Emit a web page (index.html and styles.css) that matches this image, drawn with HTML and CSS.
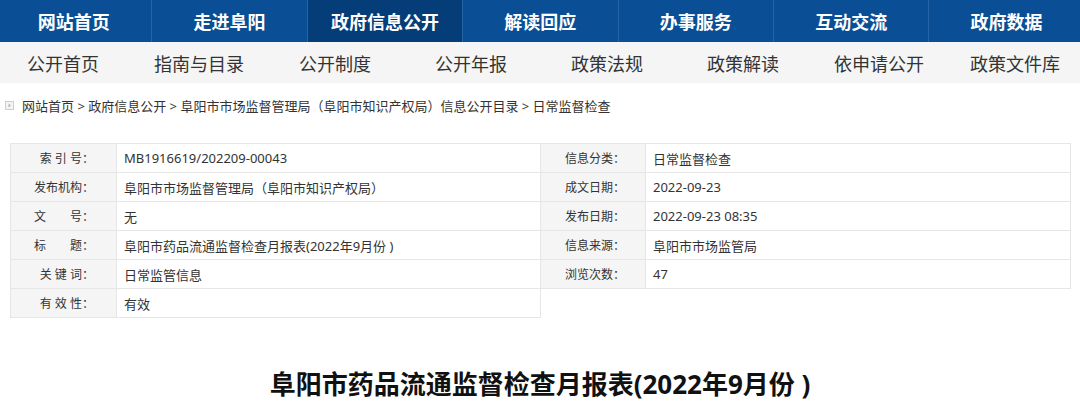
FILE: index.html
```html
<!DOCTYPE html>
<html lang="zh-CN">
<head>
<meta charset="utf-8">
<title>阜阳市药品流通监督检查月报表(2022年9月份 )</title>
<link rel="stylesheet" href="styles.css">
</head>
<body>
<div class="page">
  <nav class="mainnav">
    <div class="mainnav-inner">
      <a class="mn">网站首页</a>
      <a class="mn">走进阜阳</a>
      <a class="mn active">政府信息公开</a>
      <a class="mn">解读回应</a>
      <a class="mn">办事服务</a>
      <a class="mn">互动交流</a>
      <a class="mn">政府数据</a>
    </div>
  </nav>
  <nav class="subnav">
    <div class="subnav-inner">
      <a class="sn">公开首页</a>
      <a class="sn">指南与目录</a>
      <a class="sn">公开制度</a>
      <a class="sn">公开年报</a>
      <a class="sn">政策法规</a>
      <a class="sn">政策解读</a>
      <a class="sn">依申请公开</a>
      <a class="sn">政策文件库</a>
    </div>
  </nav>
  <div class="crumb">
    <svg class="crumb-ico" width="9" height="9" viewBox="0 0 9 9"><rect x="0.5" y="0.5" width="8" height="8" fill="#f4f4f4" stroke="#cfcfcf"/><path d="M3.5 2.5 L6 4.5 L3.5 6.5 Z" fill="#b5b5b5"/></svg>
    <span>网站首页 &gt; 政府信息公开 &gt; 阜阳市市场监督管理局（阜阳市知识产权局）信息公开目录 &gt; 日常监督检查</span>
  </div>
  <div class="meta">
    <table class="mt mt-left">
      <tr><th>索 引 号<span class="colon">：</span></th><td>MB1916619/202209-00043</td></tr>
      <tr><th>发布机构<span class="colon">：</span></th><td>阜阳市市场监督管理局（阜阳市知识产权局）</td></tr>
      <tr><th>文&emsp;&emsp;号<span class="colon">：</span></th><td>无</td></tr>
      <tr><th>标&emsp;&emsp;题<span class="colon">：</span></th><td>阜阳市药品流通监督检查月报表(2022年9月份 )</td></tr>
      <tr><th>关 键 词<span class="colon">：</span></th><td>日常监管信息</td></tr>
      <tr><th>有 效 性<span class="colon">：</span></th><td>有效</td></tr>
    </table>
    <table class="mt mt-right">
      <tr><th>信息分类<span class="colon">：</span></th><td>日常监督检查</td></tr>
      <tr><th>成文日期<span class="colon">：</span></th><td>2022-09-23</td></tr>
      <tr><th>发布日期<span class="colon">：</span></th><td>2022-09-23 08:35</td></tr>
      <tr><th>信息来源<span class="colon">：</span></th><td>阜阳市市场监管局</td></tr>
      <tr><th>浏览次数<span class="colon">：</span></th><td>47</td></tr>
    </table>
  </div>
  <h1 class="title">阜阳市药品流通监督检查月报表(2022年9月份 )</h1>
</div>
</body>
</html>
```
FILE: styles.css
```css
* { box-sizing: border-box; }
html, body { margin: 0; padding: 0; background: #fff; }
body {
  font-family: "Noto Sans", "Noto Sans CJK SC", sans-serif;
  color: #333;
  width: 1080px;
  height: 414px;
  overflow: hidden;
}
.page { width: 1080px; }

.mainnav { height: 42px; background: #0a4f95; overflow: hidden; }
.mainnav-inner {
  display: grid;
  grid-template-columns: repeat(7, 155.4px);
  width: 1088px;
  margin-left: -4px;
  height: 42px;
}
.mn {
  display: flex;
  align-items: center;
  justify-content: center;
  color: #fff;
  font-size: 18px;
  font-weight: bold;
  border-left: 1px solid #2564a6;
}
.mn:first-child { border-left: none; }
.mn.active { background: #053d78; }

.subnav { height: 41px; background: #f5f5f5; overflow: hidden; }
.subnav-inner {
  display: grid;
  grid-template-columns: repeat(8, 136px);
  width: 1088px;
  margin-left: -5px;
  height: 41px;
}
.sn {
  display: flex;
  align-items: center;
  justify-content: center;
  color: #333;
  font-size: 18px;
}

.crumb {
  display: flex;
  align-items: center;
  gap: 8px;
  padding-left: 5px;
  margin-top: 14px;
  height: 16px;
  font-size: 13px;
  color: #333;
}
.crumb-ico { flex: none; }

.meta {
  display: flex;
  align-items: flex-start;
  padding-left: 10px;
  margin-top: 30px;
}
.mt {
  border-collapse: collapse;
  width: 531px;
  font-size: 12px;
}
.mt-right { margin-left: -1px; }
.mt th, .mt td {
  border: 1px solid #e6e6e6;
  height: 29px;
  padding: 0;
  font-weight: normal;
  color: #333;
}
.mt th {
  background: #f5f5f5;
  text-align: right;
  padding-right: 22px;
  width: 106px;
}
.mt-right th { width: 105px; padding-right: 20px; }
.colon {
  font-family: "Noto Sans CJK TC", "Noto Sans CJK SC", sans-serif;
}
.mt td {
  text-align: left;
  padding-left: 7px;
  font-size: 13px;
}

.title {
  margin: 49px 0 0;
  text-align: center;
  font-size: 26px;
  line-height: 34px;
  font-weight: bold;
  color: #111;
}
```
